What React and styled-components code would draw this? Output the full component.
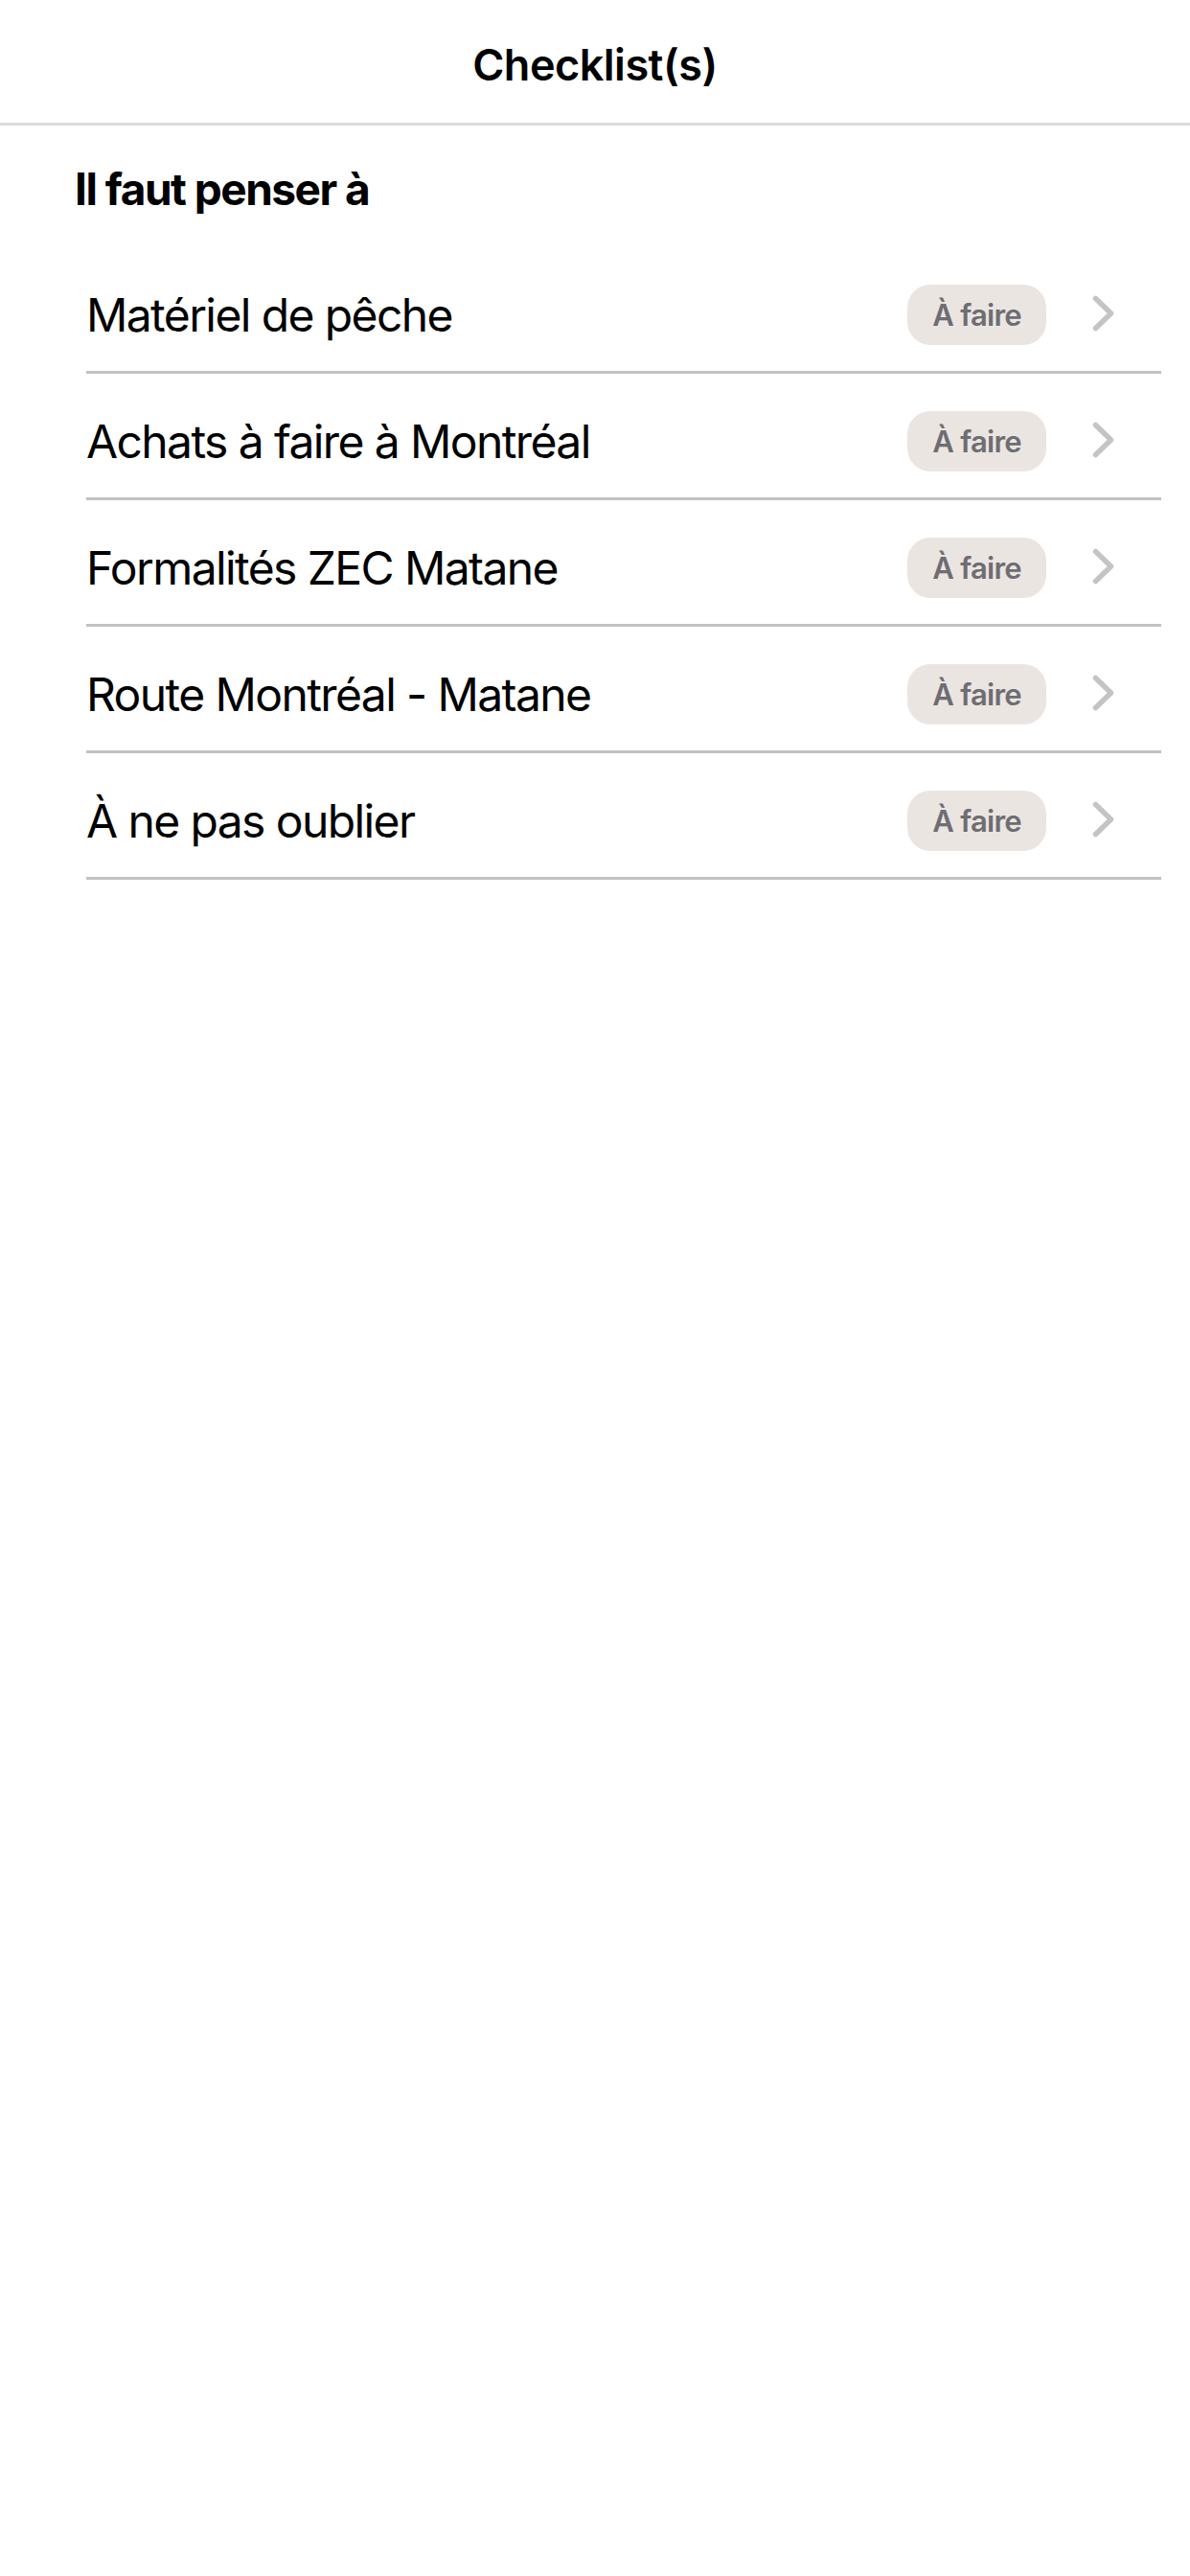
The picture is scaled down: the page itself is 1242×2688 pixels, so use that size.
import React from "react";
import styled, { createGlobalStyle } from "styled-components";

const GlobalStyle = createGlobalStyle`
  html, body {
    margin: 0;
    padding: 0;
    background: #ffffff;
  }
  body {
    font-family: Inter, "Noto Sans", "Liberation Sans", sans-serif;
    color: #000000;
    -webkit-font-smoothing: antialiased;
  }
`;

const Screen = styled.div`
  min-height: 2688px;
  background: #ffffff;
`;

const NavBar = styled.header`
  height: 122px;
  padding-top: 6px;
  display: flex;
  align-items: center;
  justify-content: center;
  border-bottom: 3px solid #dadada;
`;

const NavTitle = styled.h1`
  margin: 0;
  font-size: 45px;
  font-weight: 600;
  letter-spacing: -0.5px;
`;

const SectionTitle = styled.h2`
  margin: 40px 0 34px 78px;
  font-size: 46px;
  font-weight: 700;
  letter-spacing: -1.5px;
  line-height: 53px;
`;

const List = styled.ul`
  list-style: none;
  margin: 0 30px 0 90px;
  padding: 0;
`;

const Row = styled.li`
  display: flex;
  align-items: center;
  height: 63px;
  padding: 39px 49px 27px 0;
  border-bottom: 3px solid #c2c2c2;
`;

const Label = styled.span`
  flex: 1;
  font-size: 48px;
  font-weight: 400;
  letter-spacing: -1.6px;
  white-space: nowrap;
`;

const Status = styled.span`
  display: inline-flex;
  align-items: center;
  justify-content: center;
  height: 63px;
  padding: 0 26px;
  border-radius: 24px;
  background: ${(p) => (p.$done ? "#e1efe3" : "#ebe5e2")};
  color: #6e6d72;
  font-size: 31px;
  font-weight: 600;
  letter-spacing: -0.7px;
`;

const Chevron = styled.svg`
  flex: none;
  width: 23px;
  height: 38px;
  margin-left: 48px;
  margin-top: -4px;
`;

const items = [
  "Matériel de pêche",
  "Achats à faire à Montréal",
  "Formalités ZEC Matane",
  "Route Montréal - Matane",
  "À ne pas oublier",
];

const Disclosure = () => (
  <Chevron viewBox="0 0 23 38" fill="none">
    <polyline
      points="3.5,3.5 19.5,19 3.5,34.5"
      stroke="#c4c4c6"
      strokeWidth="5.5"
      strokeLinecap="round"
      strokeLinejoin="round"
    />
  </Chevron>
);

export default function App() {
  return (
    <Screen>
      <GlobalStyle />
      <NavBar>
        <NavTitle>Checklist(s)</NavTitle>
      </NavBar>
      <SectionTitle>Il faut penser à</SectionTitle>
      <List>
        {items.map((label) => (
          <Row key={label}>
            <Label>{label}</Label>
            <Status>À faire</Status>
            <Disclosure />
          </Row>
        ))}
      </List>
    </Screen>
  );
}
